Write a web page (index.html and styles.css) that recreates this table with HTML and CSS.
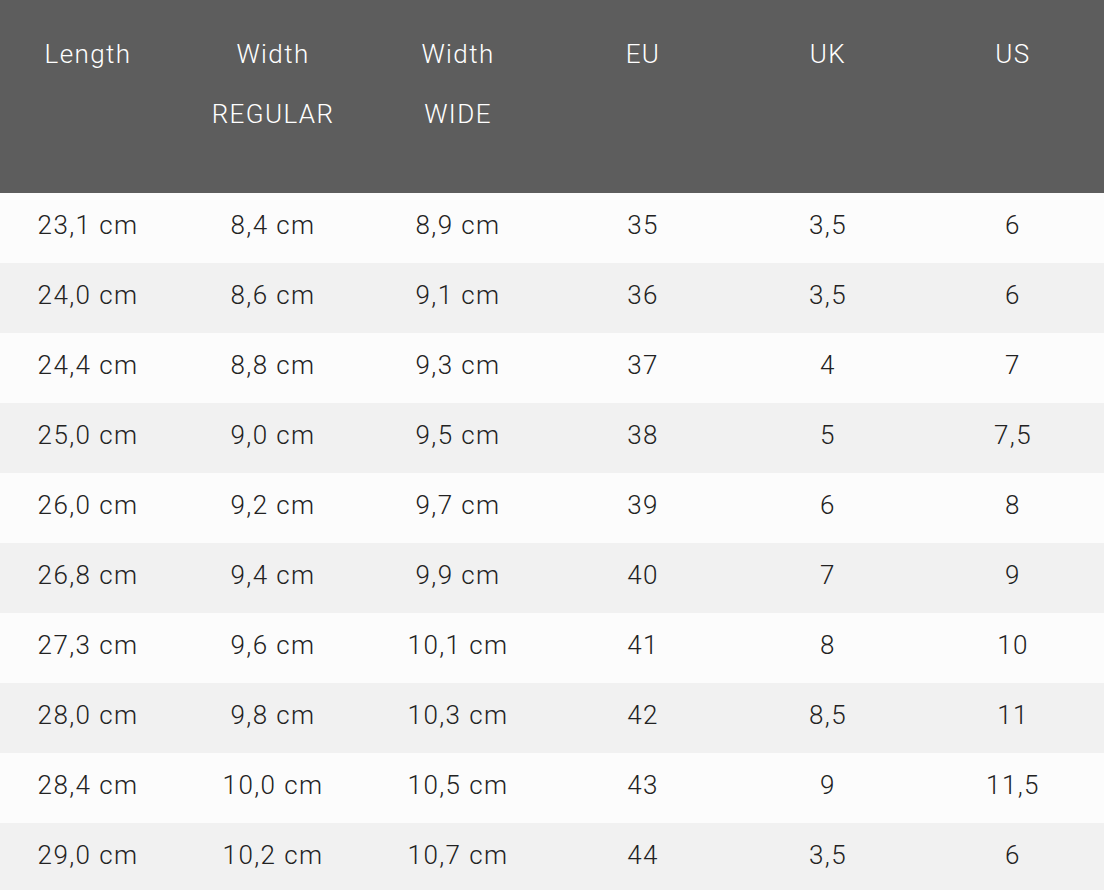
FILE: index.html
```html
<!DOCTYPE html>
<html lang="en">
<head>
<meta charset="utf-8">
<title>Size chart</title>
<link rel="stylesheet" href="styles.css">
</head>
<body>
<table class="size-table">
  <thead>
    <tr>
      <th>Length</th>
      <th>Width<br>REGULAR</th>
      <th>Width<br>WIDE</th>
      <th>EU</th>
      <th>UK</th>
      <th>US</th>
    </tr>
  </thead>
  <tbody>
    <tr><td>23,1 cm</td><td>8,4 cm</td><td>8,9 cm</td><td>35</td><td>3,5</td><td>6</td></tr>
    <tr><td>24,0 cm</td><td>8,6 cm</td><td>9,1 cm</td><td>36</td><td>3,5</td><td>6</td></tr>
    <tr><td>24,4 cm</td><td>8,8 cm</td><td>9,3 cm</td><td>37</td><td>4</td><td>7</td></tr>
    <tr><td>25,0 cm</td><td>9,0 cm</td><td>9,5 cm</td><td>38</td><td>5</td><td>7,5</td></tr>
    <tr><td>26,0 cm</td><td>9,2 cm</td><td>9,7 cm</td><td>39</td><td>6</td><td>8</td></tr>
    <tr><td>26,8 cm</td><td>9,4 cm</td><td>9,9 cm</td><td>40</td><td>7</td><td>9</td></tr>
    <tr><td>27,3 cm</td><td>9,6 cm</td><td>10,1 cm</td><td>41</td><td>8</td><td>10</td></tr>
    <tr><td>28,0 cm</td><td>9,8 cm</td><td>10,3 cm</td><td>42</td><td>8,5</td><td>11</td></tr>
    <tr><td>28,4 cm</td><td>10,0 cm</td><td>10,5 cm</td><td>43</td><td>9</td><td>11,5</td></tr>
    <tr><td>29,0 cm</td><td>10,2 cm</td><td>10,7 cm</td><td>44</td><td>3,5</td><td>6</td></tr>
  </tbody>
</table>
</body>
</html>
```

FILE: styles.css
```css
html, body {
  margin: 0;
  padding: 0;
  overflow: hidden;
  background: #fcfcfc;
}

.size-table {
  width: 1110px;
  table-layout: fixed;
  border-collapse: collapse;
  border-spacing: 0;
  font-family: Roboto, "Liberation Sans", sans-serif;
  font-size: 26px;
  font-weight: 300;
  letter-spacing: 1.4px;
  color: #222;
}

.size-table th,
.size-table td {
  width: 185px;
  text-align: center;
  padding: 0 9px 0 0;
  box-sizing: border-box;
}

.size-table th {
  background: #5d5d5d;
  color: #fff;
  font-weight: 300;
  vertical-align: top;
  line-height: 60px;
  height: 193px;
  padding-top: 24px;
}

.size-table td {
  height: 70px;
  line-height: 65px;
  padding-bottom: 5px;
}

.size-table tbody tr:nth-child(odd) td {
  background: #fcfcfc;
}

.size-table tbody tr:nth-child(even) td {
  background: #f1f1f1;
}
```
